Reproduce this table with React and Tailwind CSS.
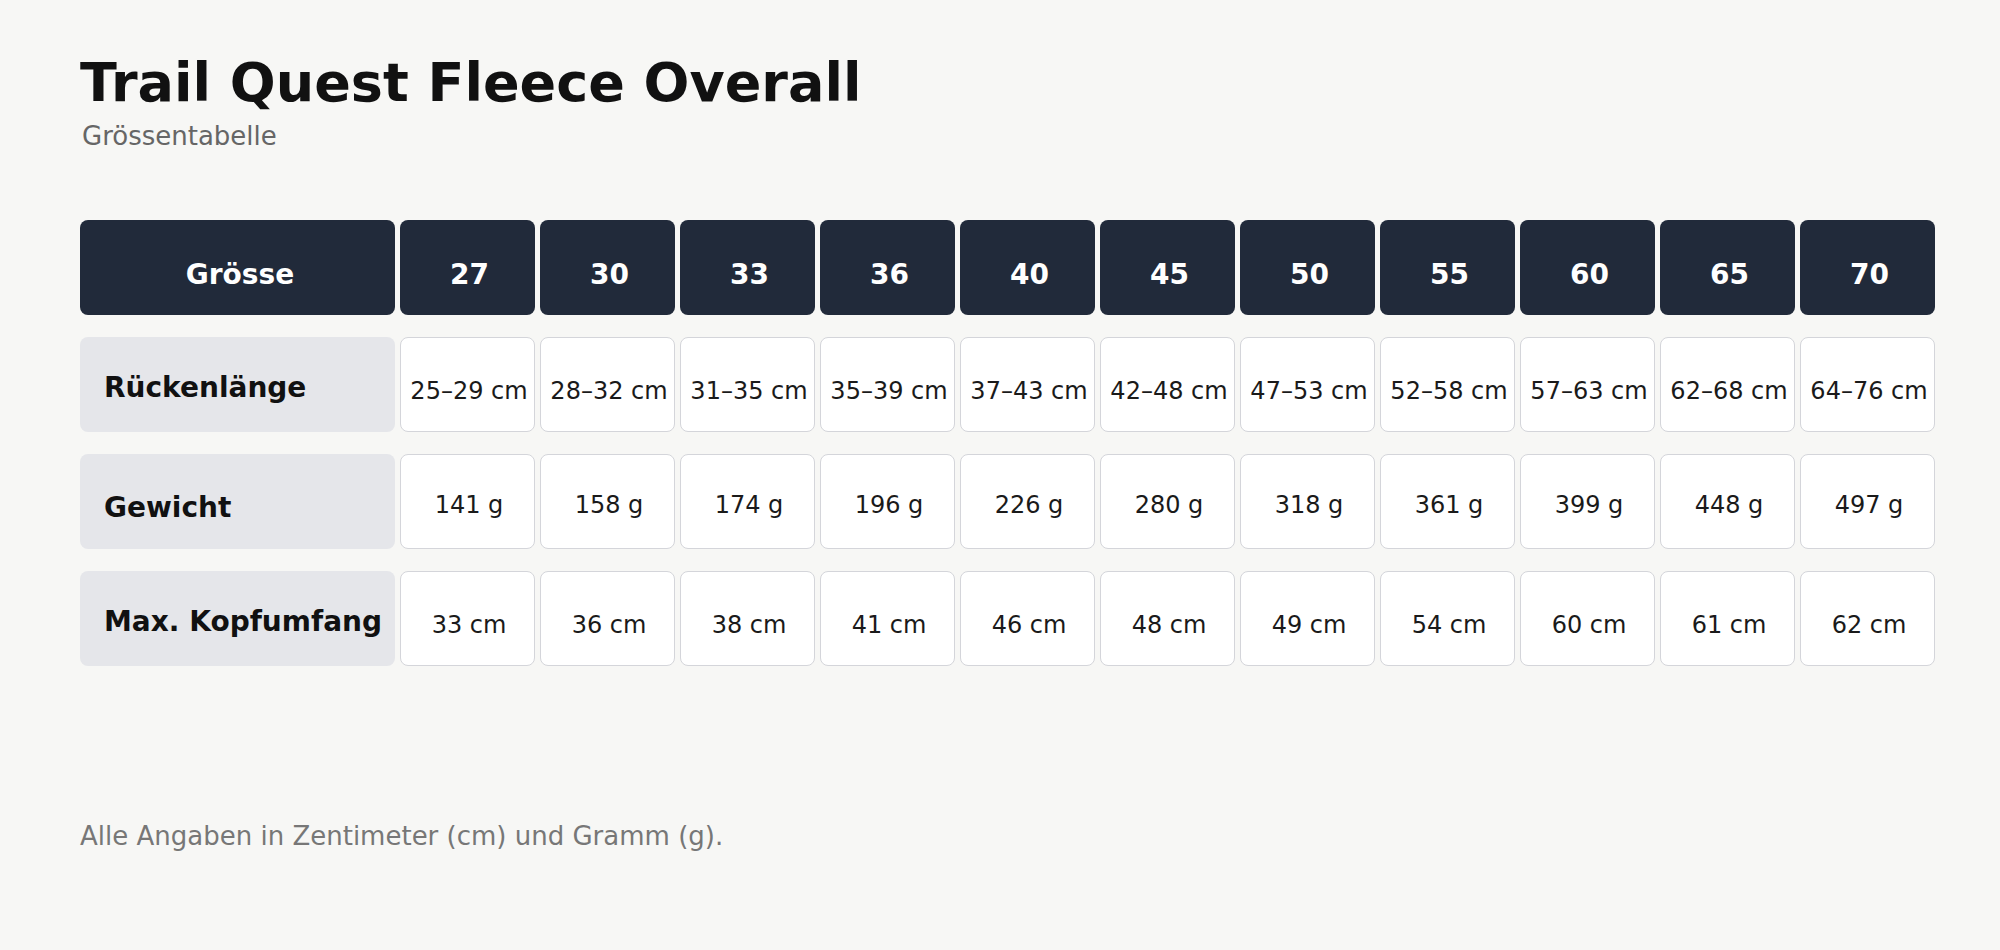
const sizes = ["27", "30", "33", "36", "40", "45", "50", "55", "60", "65", "70"];

// label / value padding differ per row so the text sits like in the original
const rows = [
  {
    label: "Rückenlänge",
    labelPad: "pt-[8px]",
    valuePad: "pt-[14px]",
    values: [
      "25–29 cm",
      "28–32 cm",
      "31–35 cm",
      "35–39 cm",
      "37–43 cm",
      "42–48 cm",
      "47–53 cm",
      "52–58 cm",
      "57–63 cm",
      "62–68 cm",
      "64–76 cm",
    ],
  },
  {
    label: "Gewicht",
    labelPad: "pt-[13px]",
    valuePad: "pt-[7px]",
    values: ["141 g", "158 g", "174 g", "196 g", "226 g", "280 g", "318 g", "361 g", "399 g", "448 g", "497 g"],
  },
  {
    label: "Max. Kopfumfang",
    labelPad: "pt-[7px]",
    valuePad: "pt-[14px]",
    values: ["33 cm", "36 cm", "38 cm", "41 cm", "46 cm", "48 cm", "49 cm", "54 cm", "60 cm", "61 cm", "62 cm"],
  },
];

export default function App() {
  return (
    <div className="min-h-screen bg-[#f7f7f5] px-[80px] pt-[51px] font-['DejaVu_Sans',sans-serif]">
      <h1 className="text-[54px] font-bold leading-[1.2] text-[#111111]">Trail Quest Fleece Overall</h1>
      <p className="mt-[5px] pl-[2px] text-[26px] leading-[1.2] text-[#666666]">Grössentabelle</p>

      <div className="mt-[68px] grid w-[1855px] grid-cols-[315px_repeat(11,135px)] gap-x-[5px] gap-y-[22px]">
        <div className="flex h-[95px] items-center justify-center rounded-[8px] bg-[#212a3a] pt-[15px] pl-[5px] text-[28px] font-bold text-white">
          Grösse
        </div>
        {sizes.map((s) => (
          <div
            key={s}
            className="flex h-[95px] items-center justify-center rounded-[8px] bg-[#212a3a] pt-[15px] pl-[4px] text-[28px] font-bold text-white"
          >
            {s}
          </div>
        ))}

        {rows.map((row) => (
          <div key={row.label} className="contents">
            <div
              className={`flex h-[95px] items-center rounded-[8px] bg-[#e5e6ea] pl-[24px] text-[28px] font-bold text-[#111111] ${row.labelPad}`}
            >
              {row.label}
            </div>
            {row.values.map((v, i) => (
              <div
                key={i}
                className={`flex h-[95px] items-center justify-center rounded-[8px] border border-[#d4d5da] bg-white pl-[3px] text-[24px] whitespace-nowrap text-[#1a1a1a] ${row.valuePad}`}
              >
                {v}
              </div>
            ))}
          </div>
        ))}
      </div>

      <p className="mt-[155px] text-[26px] leading-[1.2] text-[#777777]">Alle Angaben in Zentimeter (cm) und Gramm (g).</p>
    </div>
  );
}
